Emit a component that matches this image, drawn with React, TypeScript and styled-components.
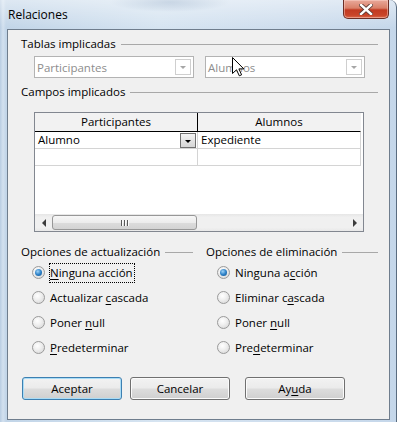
import * as React from "react";
import styled, { createGlobalStyle } from "styled-components";

const GlobalStyle = createGlobalStyle`
  html, body {
    margin: 0;
    padding: 0;
  }
  body {
    font-family: "Open Sans", "Noto Sans", sans-serif;
    font-size: 11.5px;
    color: #000;
  }
`;

const Window = styled.div`
  position: relative;
  width: 397px;
  height: 422px;
  box-sizing: border-box;
  border-right: 1px solid #5a6c80;
  border-top-right-radius: 7px;
  overflow: hidden;
  background:
    linear-gradient(180deg, rgba(255, 255, 255, 0.45) 0px, rgba(255, 255, 255, 0) 28px),
    radial-gradient(ellipse 60px 10px at 170px 2px, rgba(120, 150, 185, 0.55), rgba(120, 150, 185, 0)),
    linear-gradient(90deg, #b9cde2 0px, #d3e1ef 3px, #c2d5e8 6px, #d6e4f1 40%, #cfdeee 70%, #c5d7ea 100%);
`;

const TitleBar = styled.div`
  display: flex;
  align-items: flex-start;
  height: 29px;
  padding-left: 8px;
`;

const Title = styled.div`
  margin-top: 7px;
  line-height: 16px;
  font-size: 12px;
  color: #000;
`;

const CloseButton = styled.div`
  margin-left: auto;
  margin-right: 7px;
  width: 46px;
  height: 19px;
  box-sizing: border-box;
  display: flex;
  align-items: center;
  justify-content: center;
  border: 1px solid #6b2e26;
  border-top: none;
  border-radius: 0 0 5px 5px;
  background: linear-gradient(180deg, #e9a99b 0%, #d98069 45%, #c23a22 55%, #c9452a 85%, #dc6a4c 100%);
  box-shadow: inset 0 0 0 1px rgba(255, 220, 210, 0.45);
`;

const Client = styled.div`
  margin-left: 7px;
  width: 383px;
  height: 391px;
  box-sizing: border-box;
  border: 1px solid #6f7d8d;
  background: #f0f0f0;
  padding: 7px 11px 0 13px;
`;

const FrameLabel = styled.div`
  display: flex;
  align-items: center;
  gap: 5px;
  height: 14px;
  line-height: 14px;
  white-space: nowrap;

  &::after {
    content: "";
    flex: 1;
    height: 1px;
    background: #a8a8a8;
  }
`;

const ListRow = styled.div`
  display: flex;
  gap: 11px;
  margin-top: 5px;
  padding-left: 13px;
  margin-bottom: 7px;
`;

const ListBox = styled.div`
  width: 160px;
  height: 22px;
  box-sizing: border-box;
  border: 1px solid #b3b3b3;
  background: #fff;
  color: #8d8d8d;
  display: flex;
  align-items: center;
  padding-left: 2px;
`;

const DisabledArrow = styled.div`
  margin-left: auto;
  margin-right: 2px;
  width: 16px;
  height: 16px;
  box-sizing: border-box;
  border: 1px solid #cfcfcf;
  display: flex;
  align-items: center;
  justify-content: center;

  &::after {
    content: "";
    border-left: 3px solid transparent;
    border-right: 3px solid transparent;
    border-top: 3px solid #a6a6a6;
  }
`;

const Table = styled.div`
  margin-top: 13px;
  margin-left: 13px;
  width: 330px;
  height: 120px;
  box-sizing: border-box;
  border: 1px solid #828790;
  background: #fff;
  display: flex;
  flex-direction: column;
  margin-bottom: 13px;
`;

const Grid = styled.div`
  display: grid;
  grid-template-columns: 163px 163px;
`;

const HeadCell = styled.div<{ $last?: boolean }>`
  height: 19px;
  box-sizing: border-box;
  background: #f2f2f2;
  border-bottom: 1px solid #000;
  border-right: 1px solid ${(p) => (p.$last ? "#f2f2f2" : "#000")};
  text-align: center;
  line-height: 18px;
`;

const Cell = styled.div`
  height: 17px;
  box-sizing: border-box;
  border-right: 1px solid #d4d4d4;
  border-bottom: 1px solid #d4d4d4;
  line-height: 16px;
  padding-left: 3px;
  display: flex;
  align-items: flex-start;
`;

const CellArrow = styled.div`
  margin-left: auto;
  margin-top: 1px;
  margin-right: 1px;
  width: 16px;
  height: 15px;
  box-sizing: border-box;
  border: 1px solid #707070;
  background: linear-gradient(180deg, #f4f4f4 0%, #e4e4e4 50%, #d6d6d6 100%);
  display: flex;
  align-items: center;
  justify-content: center;
  padding-top: 2px;

  &::after {
    content: "";
    border-left: 3px solid transparent;
    border-right: 3px solid transparent;
    border-top: 3px solid #000;
  }
`;

const Empty = styled.div`
  flex: 1;
`;

const ScrollBar = styled.div`
  height: 17px;
  display: flex;
  align-items: center;
  background: linear-gradient(180deg, #e6e6e6 0%, #f0f0f0 20%, #f0f0f0 80%, #e8e8e8 100%);
`;

const ScrollArrow = styled.div<{ $dir: "left" | "right" }>`
  width: 17px;
  height: 17px;
  display: flex;
  align-items: center;
  justify-content: center;

  &::after {
    content: "";
    border-top: 4px solid transparent;
    border-bottom: 4px solid transparent;
    ${(p) =>
      p.$dir === "left"
        ? "border-right: 4px solid #3c3c3c;"
        : "border-left: 4px solid #3c3c3c;"}
  }
`;

const Thumb = styled.div`
  width: 145px;
  height: 15px;
  box-sizing: border-box;
  border: 1px solid #979797;
  border-radius: 3px;
  background: linear-gradient(180deg, #f7f7f7 0%, #ececec 50%, #dcdcdc 51%, #d3d3d3 100%);
  display: flex;
  align-items: center;
  justify-content: center;
`;

const Grip = styled.div`
  display: flex;
  gap: 2px;

  & > span {
    width: 1px;
    height: 6px;
    background: #5a5a5a;
    box-shadow: 1px 0 0 #fafafa;
  }
`;

const Options = styled.div`
  display: grid;
  grid-template-columns: 1fr 1fr;
  column-gap: 13px;
`;

const RadioList = styled.div`
  margin-top: 1px;
  display: flex;
  flex-direction: column;
`;

const RadioRow = styled.div<{ $indent: number }>`
  height: 25px;
  display: flex;
  align-items: center;
  padding-left: ${(p) => p.$indent}px;
`;

const RadioCircle = styled.div<{ $checked?: boolean }>`
  width: 13px;
  height: 13px;
  box-sizing: border-box;
  border-radius: 50%;
  border: 1px solid #9a9a9a;
  background: radial-gradient(circle at 40% 35%, #ffffff 0%, #f0f0f0 40%, #d2d2d2 100%);
  display: flex;
  align-items: center;
  justify-content: center;
  flex-shrink: 0;

  &::after {
    content: "";
    display: ${(p) => (p.$checked ? "block" : "none")};
    width: 7px;
    height: 7px;
    border-radius: 50%;
    background: radial-gradient(circle at 40% 35%, #9fd3f7 0%, #2f83c9 50%, #0f4f8a 100%);
  }
`;

const RadioLabel = styled.span<{ $focused?: boolean; $gap: number }>`
  margin-left: ${(p) => p.$gap}px;
  height: 20px;
  box-sizing: border-box;
  line-height: 18px;
  padding-right: 1px;
  border: 1px dotted ${(p) => (p.$focused ? "#000" : "transparent")};
  white-space: nowrap;

  & u {
    text-underline-offset: 2px;
  }
`;

const ButtonRow = styled.div`
  display: flex;
  margin-top: 17px;
  margin-left: 1px;
`;

const Button = styled.div<{ $default?: boolean; $gap: number }>`
  width: 100px;
  height: 23px;
  box-sizing: border-box;
  margin-left: ${(p) => p.$gap}px;
  border: 1px solid ${(p) => (p.$default ? "#3c7fb1" : "#707070")};
  border-radius: 3px;
  background: linear-gradient(180deg, #f2f2f2 0%, #ebebeb 48%, #dddddd 52%, #cfcfcf 100%);
  box-shadow: inset 0 0 0 1px ${(p) => (p.$default ? "#a9dcf6" : "#fbfbfb")};
  display: flex;
  align-items: center;
  justify-content: center;
  line-height: 16px;

  & u {
    text-underline-offset: 2px;
  }
`;

const Cursor = styled.svg`
  position: absolute;
  left: 232px;
  top: 57px;
`;

type RadioItem = { label: React.ReactNode; checked?: boolean; focused?: boolean };

const updateOptions: RadioItem[] = [
  { label: <><u>N</u>inguna acción</>, checked: true, focused: true },
  { label: <>Actualizar <u>c</u>ascada</> },
  { label: <>Poner <u>n</u>ull</> },
  { label: <><u>P</u>redeterminar</> },
];

const deleteOptions: RadioItem[] = [
  { label: <>Ninguna a<u>c</u>ción</>, checked: true },
  { label: <>Eliminar c<u>a</u>scada</> },
  { label: <>Poner <u>n</u>ull</> },
  { label: <>Pre<u>d</u>eterminar</> },
];

function RadioGroup({
  title,
  items,
  indent,
  gap,
}: {
  title: string;
  items: RadioItem[];
  indent: number;
  gap: number;
}) {
  return (
    <div>
      <FrameLabel>{title}</FrameLabel>
      <RadioList>
        {items.map((item, i) => (
          <RadioRow key={i} $indent={indent}>
            <RadioCircle $checked={item.checked} />
            <RadioLabel $focused={item.focused} $gap={gap}>
              {item.label}
            </RadioLabel>
          </RadioRow>
        ))}
      </RadioList>
    </div>
  );
}

export default function App() {
  return (
    <>
      <GlobalStyle />
      <Window>
        <TitleBar>
          <Title>Relaciones</Title>
          <CloseButton>
            <svg width="14" height="11" viewBox="0 0 14 11">
              <path
                d="M2 1 L12 10 M12 1 L2 10"
                stroke="#5b3a34"
                strokeWidth="4.2"
                strokeLinecap="square"
              />
              <path
                d="M2 1 L12 10 M12 1 L2 10"
                stroke="#ffffff"
                strokeWidth="2.4"
                strokeLinecap="square"
              />
            </svg>
          </CloseButton>
        </TitleBar>
        <Client>
          <FrameLabel>Tablas implicadas</FrameLabel>
          <ListRow>
            <ListBox>
              Participantes
              <DisabledArrow />
            </ListBox>
            <ListBox>
              Alumnos
              <DisabledArrow />
            </ListBox>
          </ListRow>

          <FrameLabel>Campos implicados</FrameLabel>
          <Table>
            <Grid>
              <HeadCell>Participantes</HeadCell>
              <HeadCell $last>Alumnos</HeadCell>
              <Cell>
                Alumno
                <CellArrow />
              </Cell>
              <Cell>Expediente</Cell>
              <Cell />
              <Cell />
            </Grid>
            <Empty />
            <ScrollBar>
              <ScrollArrow $dir="left" />
              <Thumb>
                <Grip>
                  <span />
                  <span />
                  <span />
                </Grip>
              </Thumb>
              <Empty />
              <ScrollArrow $dir="right" />
            </ScrollBar>
          </Table>

          <Options>
            <RadioGroup title="Opciones de actualización" items={updateOptions} indent={11} gap={4} />
            <RadioGroup title="Opciones de eliminación" items={deleteOptions} indent={11} gap={4} />
          </Options>

          <ButtonRow>
            <Button $default $gap={0}>Aceptar</Button>
            <Button $gap={8}>Cancelar</Button>
            <Button $gap={15}>
              Ay<u>u</u>da
            </Button>
          </ButtonRow>
        </Client>
        <Cursor width="13" height="20" viewBox="0 0 13 20">
          <path
            d="M0.5 0.5 L0.5 16.5 L4.5 12.8 L7.3 18.8 L9.6 17.8 L6.9 11.9 L11.8 11.9 Z"
            fill="#ffffff"
            stroke="#000000"
            strokeWidth="1"
            strokeLinejoin="miter"
          />
        </Cursor>
      </Window>
    </>
  );
}
